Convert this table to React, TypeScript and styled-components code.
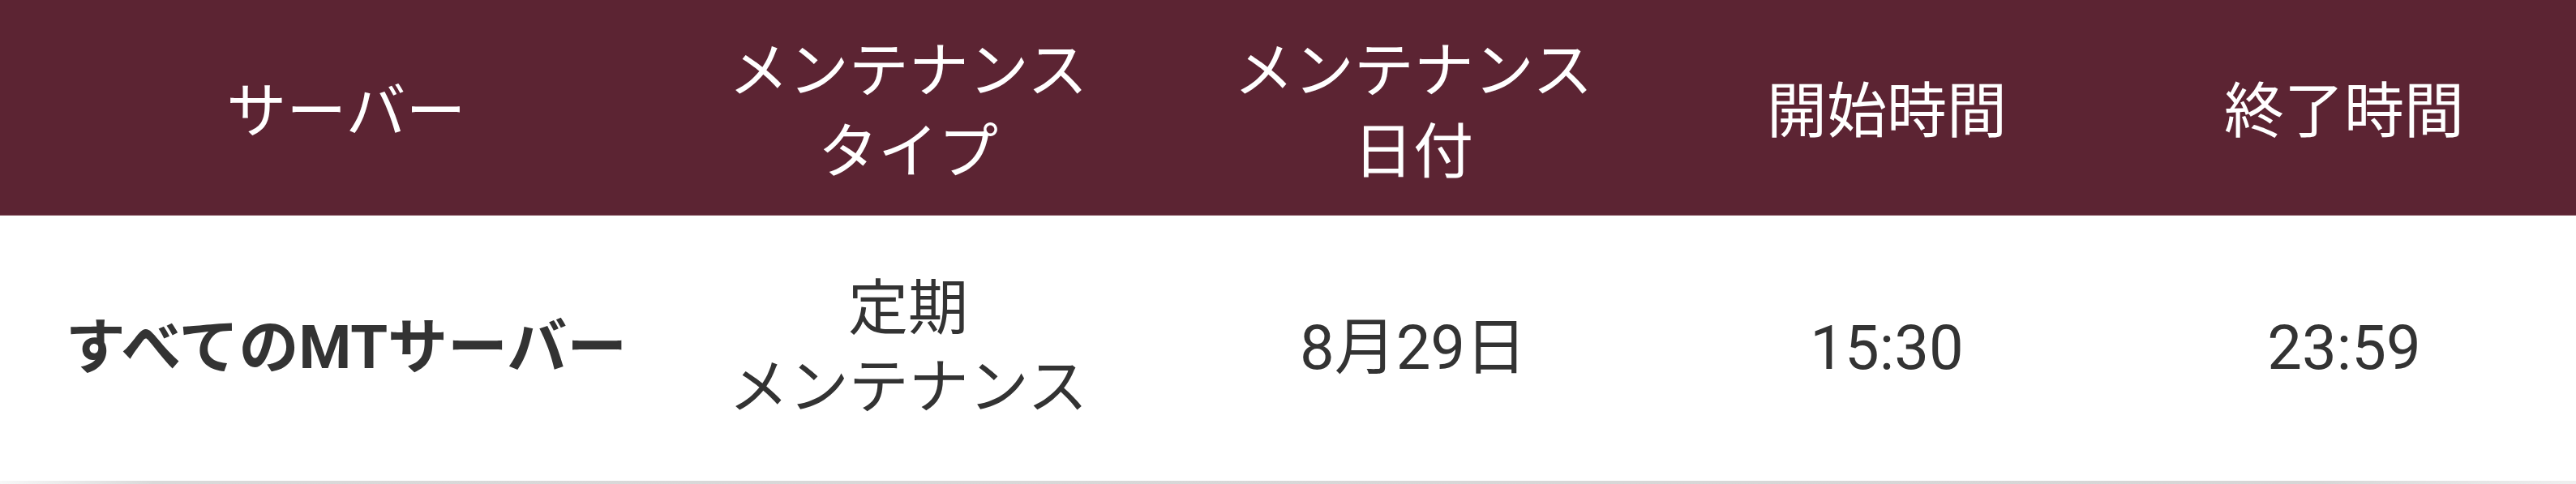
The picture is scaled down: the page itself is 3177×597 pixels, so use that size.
import React from "react";
import styled, { createGlobalStyle } from "styled-components";

type Maintenance = {
  server: string;
  type: string[];
  date: string;
  start: string;
  end: string;
};

const rows: Maintenance[] = [
  {
    server: "すべてのMTサーバー",
    type: ["定期", "メンテナンス"],
    date: "8月29日",
    start: "15:30",
    end: "23:59",
  },
];

const headings: string[][] = [
  ["サーバー"],
  ["メンテナンス", "タイプ"],
  ["メンテナンス", "日付"],
  ["開始時間"],
  ["終了時間"],
];

function App() {
  return (
    <>
      <GlobalStyle />
      <Table>
        <HeaderRow>
          {headings.map((lines, i) => (
            <HeaderCell key={i}>
              {lines.map((line) => (
                <Line key={line}>{line}</Line>
              ))}
            </HeaderCell>
          ))}
        </HeaderRow>
        {rows.map((row) => (
          <BodyRow key={row.server}>
            <ServerCell>{row.server}</ServerCell>
            <BodyCell>
              {row.type.map((line) => (
                <Line key={line}>{line}</Line>
              ))}
            </BodyCell>
            <BodyCell $numeric>{row.date}</BodyCell>
            <BodyCell $numeric>{row.start}</BodyCell>
            <BodyCell $numeric>{row.end}</BodyCell>
          </BodyRow>
        ))}
        <Shadow />
      </Table>
    </>
  );
}

const GlobalStyle = createGlobalStyle`
  html, body {
    margin: 0;
    padding: 0;
    background: #ffffff;
  }
  body {
    font-family: Roboto, "Noto Sans CJK JP", sans-serif;
  }
`;

const Table = styled.div`
  width: 3177px;
  display: flex;
  flex-direction: column;
`;

const gridColumns = `
  display: grid;
  grid-template-columns: 803px 634px 612px 556px 572px;
  align-items: center;
  & > :first-child {
    padding-left: 51px;
  }
`;

const HeaderRow = styled.div`
  ${gridColumns}
  height: 265px;
  background: #5c2433;
  border-bottom: 1px solid #8a5c68;
  color: #ffffff;
`;

const HeaderCell = styled.div`
  display: flex;
  flex-direction: column;
  align-items: center;
  font-size: 74px;
  line-height: 1.35;
  font-weight: 400;
  padding-top: 10px;
`;

const Line = styled.span`
  white-space: nowrap;
`;

const BodyRow = styled.div`
  ${gridColumns}
  height: 327px;
  color: #333333;
`;

const BodyCell = styled.div<{ $numeric?: boolean }>`
  display: flex;
  flex-direction: column;
  align-items: center;
  font-size: ${({ $numeric }) => ($numeric ? "76px" : "74px")};
  line-height: 1.3;
  font-weight: 400;
  white-space: nowrap;
`;

const ServerCell = styled(BodyCell)`
  font-weight: 700;
`;

const Shadow = styled.div`
  height: 4px;
  background: linear-gradient(
    to right,
    #f7f7f7 0%,
    #d9d9d9 6%,
    #d6d6d6 90%,
    #efefef 100%
  );
`;

export default App;
